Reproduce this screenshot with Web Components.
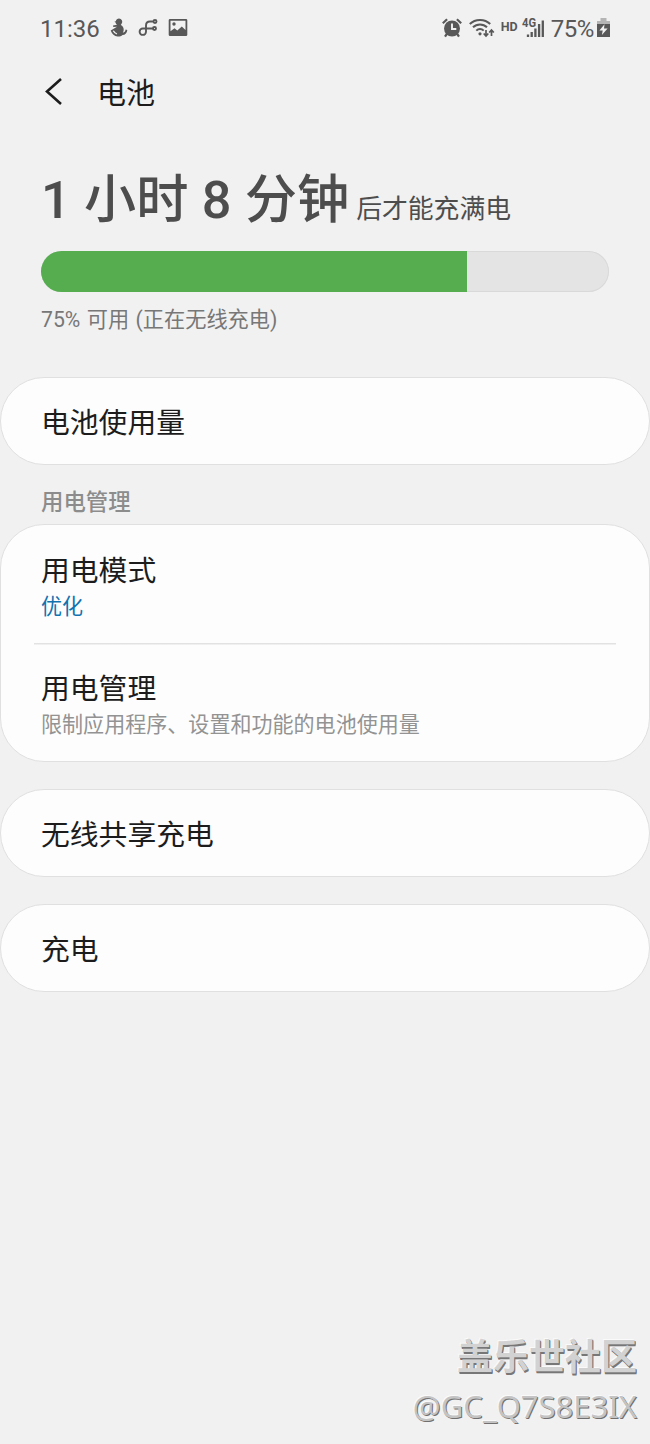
<!DOCTYPE html>
<html lang="zh-CN">
<head>
<meta charset="utf-8">
<meta name="viewport" content="width=device-width, initial-scale=1">
<title>电池</title>
<style>
    html, body {
        margin: 0;
        height: 100%;
    }
    body {
        --bg: #f1f1f1;
        --card: #fdfdfd;
        --line: #e0e0e0;
        --text: #1c1c1c;
        --icon: #585858;
        --accent: #1272b0;
        background: var(--bg);
        color: var(--text);
        font-family: Roboto, "Noto Sans CJK SC", sans-serif;
    }
</style>
</head>
<body>
<battery-screen>
    <status-bar slot="status" time="11:36" level="75%"></status-bar>
    <app-bar slot="header">电池</app-bar>
    <battery-summary level="75">
        <span slot="time">1 小时 8 分钟</span>
        <span slot="suffix">后才能充满电</span>
        <span slot="info">75% 可用 (正在无线充电)</span>
    </battery-summary>
    <settings-card>
        <settings-row>电池使用量</settings-row>
    </settings-card>
    <section-label>用电管理</section-label>
    <settings-card>
        <settings-row detailed>用电模式<span slot="detail" style="color: var(--accent)">优化</span></settings-row>
        <settings-row detailed divided>用电管理<span slot="detail">限制应用程序、设置和功能的电池使用量</span></settings-row>
    </settings-card>
    <settings-card spaced>
        <settings-row>无线共享充电</settings-row>
    </settings-card>
    <settings-card spaced>
        <settings-row>充电</settings-row>
    </settings-card>
    <community-mark slot="footer">盖乐世社区<span slot="user">@GC_Q7S8E3IX</span></community-mark>
</battery-screen>

<script>
(function() {
    // attach an open shadow root holding the given markup
    function render(host, html) {
        const $template = document.createElement('template');
        $template.innerHTML = html;
        host.attachShadow({ mode: 'open' }).appendChild($template.content.cloneNode(true));
    }

    class BatteryScreen extends HTMLElement {
        constructor() {
            super();
            render(this, `
            <style>
                :host {
                    display: flex;
                    flex-direction: column;
                    box-sizing: border-box;
                    height: 1444px;
                    overflow: hidden;
                }
                main {
                    display: flex;
                    flex-direction: column;
                }
                footer {
                    margin-top: auto;
                }
            </style>
            <slot name="status"></slot>
            <slot name="header"></slot>
            <main><slot></slot></main>
            <footer><slot name="footer"></slot></footer>
            `);
        }
    }

    class StatusBar extends HTMLElement {
        constructor() {
            super();
            render(this, `
            <style>
                :host {
                    display: flex;
                    justify-content: space-between;
                    align-items: center;
                    box-sizing: border-box;
                    height: 56px;
                    padding: 0 39px 0 40px;
                    color: var(--icon);
                    font-size: 24px;
                    line-height: 28px;
                }
                div {
                    display: flex;
                    align-items: center;
                }
                svg {
                    display: block;
                    flex: none;
                }
                .time { width: 70px; }
                .time, .level { padding-top: 1px; }
                .hd { font-size: 12.500px; font-weight: 700; margin: -2px 4px 0 6px; }
                .signal { width: 23px; height: 24px; }
                .signal text { font: 700 12px Roboto, sans-serif; }
                .level { margin: 0 2px 0 6px; letter-spacing: -.4px; }
            </style>
            <div class="left">
                <span class="time"></span>
                <svg width="18" height="20" viewBox="0 0 18 20">
                    <path fill="currentColor" d="M9 .5a3.200 3.200 0 0 1 2.700 5L10.800 7c1.900.9 3 2.700 2.900 5-.1 1-.4 2-.9 2.800 1.600-.3 2.600-1.300 2.800-3.200l1.700.3c-.2 3-2 4.900-4.800 5.100-1.300 1.300-3 1.600-5 1.500C4.500 18.300 2 16 .7 12.500l3.800-2.300L7 8.800 3.300 9 3 7.500l4-.8C6.100 6 5.700 5.300 5.600 4.500L4.400 3.800l1.400-.6C6.300 1.500 7.400.5 9 .5z"/>
                    <path stroke="#f1f1f1" stroke-width="1.300" fill="none" d="M3.300 12.800c.8 1.600 2 2.700 3.700 3.200"/>
                </svg>
                <svg style="margin-left: 10px" width="20" height="20" viewBox="0 0 20 20" fill="none" stroke="currentColor" stroke-width="1.900">
                    <path d="M15 10.500H4.800a3.200 3.200 0 1 0 3.200 3.200V7.500c0-2.800 1.200-4 4-4h3"/>
                    <circle cx="17" cy="3.500" r="1.500"/>
                    <circle cx="16.500" cy="10.500" r="1.500"/>
                </svg>
                <svg style="margin-left: 10px" width="20" height="18" viewBox="0 0 20 18">
                    <path fill="currentColor" fill-rule="evenodd" d="M2 0h16a1.300 1.300 0 0 1 1.300 1.300v14.400A1.300 1.300 0 0 1 18 17H2a1.300 1.300 0 0 1-1.300-1.300V1.300A1.300 1.300 0 0 1 2 0zm.5 1.800v10.500l4-3 2.800 2.300 4.500-4.200 3.700 3.500V1.800zM6 3.300a1.700 1.700 0 1 1 0 3.400 1.700 1.700 0 0 1 0-3.400z"/>
                </svg>
            </div>
            <div class="right">
                <svg width="20" height="20" viewBox="0 0 20 20">
                    <circle cx="10" cy="10.500" r="8" fill="currentColor"/>
                    <path fill="none" stroke="currentColor" stroke-width="2.200" d="M.8 5.300 5.100 1.300M14.900 1.300 19.200 5.300M4.800 16l-1.800 2.600M15.200 16l1.800 2.600"/>
                    <path fill="none" stroke="#f1f1f1" stroke-width="1.900" d="M10 5.500V11h4.300"/>
                </svg>
                <svg style="margin-left: 7px" width="26" height="20" viewBox="0 0 26 20" fill="none" stroke="currentColor" stroke-width="2">
                    <path d="M.8 6C6.300.5 15.700.5 21.200 6M4 9.300c3.900-3.800 10.100-3.800 14 0M7.300 12.600c2.100-2 5.300-2 7.400 0"/>
                    <circle cx="11" cy="15.800" r="1.600" fill="currentColor" stroke="none"/>
                    <path stroke-width="1.700" d="M17 12v6M14.700 15.500 17 18l2.300-2.500M22.500 18v-6M20.200 14.500l2.300-2.500 2.300 2.500"/>
                </svg>
                <span class="hd">HD</span>
                <svg class="signal" viewBox="0 0 23 24">
                    <text x="0" y="10.500" fill="currentColor" textLength="14" lengthAdjust="spacingAndGlyphs">4G</text>
                    <path fill="none" stroke="currentColor" stroke-width="2.300" d="M6 21v-2.500M9.700 21v-5M13.400 21v-8.500M17.100 21V8M20.800 21V4.500"/>
                </svg>
                <span class="level"></span>
                <svg width="15" height="20" viewBox="0 0 15 20">
                    <path fill="#b5b5b5" d="M4.500 0h6v3H14v4H1V3h3.500z"/>
                    <path fill="currentColor" d="M1 6h13v13H1z"/>
                    <path fill="#f1f1f1" d="M8.500 6.200 3.400 12.500h3.300L5.900 17l5.700-6.600H8z"/>
                </svg>
            </div>
            `);
        }

        connectedCallback() {
            this.shadowRoot.querySelector('.time').textContent  = this.getAttribute('time');
            this.shadowRoot.querySelector('.level').textContent = this.getAttribute('level');
        }
    }

    class AppBar extends HTMLElement {
        constructor() {
            super();
            render(this, `
            <style>
                :host {
                    display: flex;
                    align-items: center;
                    box-sizing: border-box;
                    height: 74px;
                    padding: 2px 0 0 44px;
                    font-size: 29px;
                    line-height: 40px;
                }
                svg { width: 20px; height: 28px; margin: -6px 33px 0 0; }
            </style>
            <svg viewBox="0 0 20 28"><path d="M17 2 3 14.500 17 27" fill="none" stroke="currentColor" stroke-width="2.600"/></svg>
            <slot></slot>
            `);
        }
    }

    class BatterySummary extends HTMLElement {
        constructor() {
            super();
            render(this, `
            <style>
                :host {
                    display: block;
                    height: 247px;
                    box-sizing: border-box;
                    padding: 34px 41px 0;
                }
                .headline {
                    display: flex;
                    align-items: baseline;
                    gap: 7px;
                    height: 87px;
                    line-height: 73px;
                    color: #4d4d4d;
                    white-space: nowrap;
                }
                .time { font-size: 52.200px; font-weight: 500; word-spacing: .4px; }
                .suffix { font-size: 25.800px; }
                .track {
                    height: 41px;
                    border-radius: 21px;
                    box-sizing: border-box;
                    background: #e4e4e4;
                    box-shadow: inset 0 0 0 1px #d9d9d9;
                    overflow: hidden;
                }
                .fill {
                    height: 100%;
                    background: #55ad50;
                }
                .info {
                    margin-top: 12px;
                    font-size: 21.200px;
                    line-height: 31px;
                    word-spacing: 1.200px;
                    color: #777;
                }
            </style>
            <div class="headline">
                <span class="time"><slot name="time"></slot></span>
                <span class="suffix"><slot name="suffix"></slot></span>
            </div>
            <div class="track"><div class="fill"></div></div>
            <div class="info"><slot name="info"></slot></div>
            `);
        }

        connectedCallback() {
            this.shadowRoot.querySelector('.fill').style.width = this.getAttribute('level') + '%';
        }
    }

    class SettingsCard extends HTMLElement {
        constructor() {
            super();
            render(this, `
            <style>
                :host {
                    display: block;
                    box-sizing: border-box;
                    border: 1px solid var(--line);
                    border-radius: 44px;
                    background: var(--card);
                }
                :host([spaced]) { margin-top: 27px; }
            </style>
            <slot></slot>
            `);
        }
    }

    class SettingsRow extends HTMLElement {
        constructor() {
            super();
            render(this, `
            <style>
                :host {
                    display: block;
                    box-sizing: border-box;
                    height: 86px;
                    padding: 26px 40px 0;
                    font-size: 28.800px;
                    line-height: 39px;
                }
                :host([detailed]) {
                    height: 118px;
                    padding-top: 27px;
                }
                :host([divided]) {
                    background: linear-gradient(#e2e2e2, #e2e2e2) 33px 0 / calc(100% - 66px) 1.500px no-repeat;
                }
                .detail {
                    font-size: 21.050px;
                    line-height: 32px;
                    color: #939393;
                }
            </style>
            <div><slot></slot></div>
            <div class="detail"><slot name="detail"></slot></div>
            `);
        }
    }

    class SectionLabel extends HTMLElement {
        constructor() {
            super();
            render(this, `
            <style>
                :host {
                    display: block;
                    box-sizing: border-box;
                    height: 59px;
                    padding: 22px 41px 0;
                    font-size: 22.400px;
                    font-weight: 500;
                    line-height: 30px;
                    color: #8c8c8c;
                }
            </style>
            <slot></slot>
            `);
        }
    }

    class CommunityMark extends HTMLElement {
        constructor() {
            super();
            render(this, `
            <style>
                :host {
                    display: flex;
                    flex-direction: column;
                    align-items: flex-end;
                    padding: 0 13px 14px 0;
                    color: #d2d2d2;
                    text-shadow: 1px 1px 0 #777, 1px 2px 0 #777, -1px -1px 0 #fafafa;
                    font-size: 36px;
                    font-weight: 700;
                    line-height: 48px;
                }
                .user {
                    font: 400 31px/48px "Noto Sans", sans-serif;
                    color: #c4c4c4;
                    text-shadow: 1px 1px 0 #707070, -1px -1px 0 #fafafa;
                }
            </style>
            <div><slot></slot></div>
            <div class="user"><slot name="user"></slot></div>
            `);
        }
    }

    customElements.define('battery-screen', BatteryScreen);
    customElements.define('status-bar', StatusBar);
    customElements.define('app-bar', AppBar);
    customElements.define('battery-summary', BatterySummary);
    customElements.define('settings-card', SettingsCard);
    customElements.define('settings-row', SettingsRow);
    customElements.define('section-label', SectionLabel);
    customElements.define('community-mark', CommunityMark);
})();
</script>
</body>
</html>
